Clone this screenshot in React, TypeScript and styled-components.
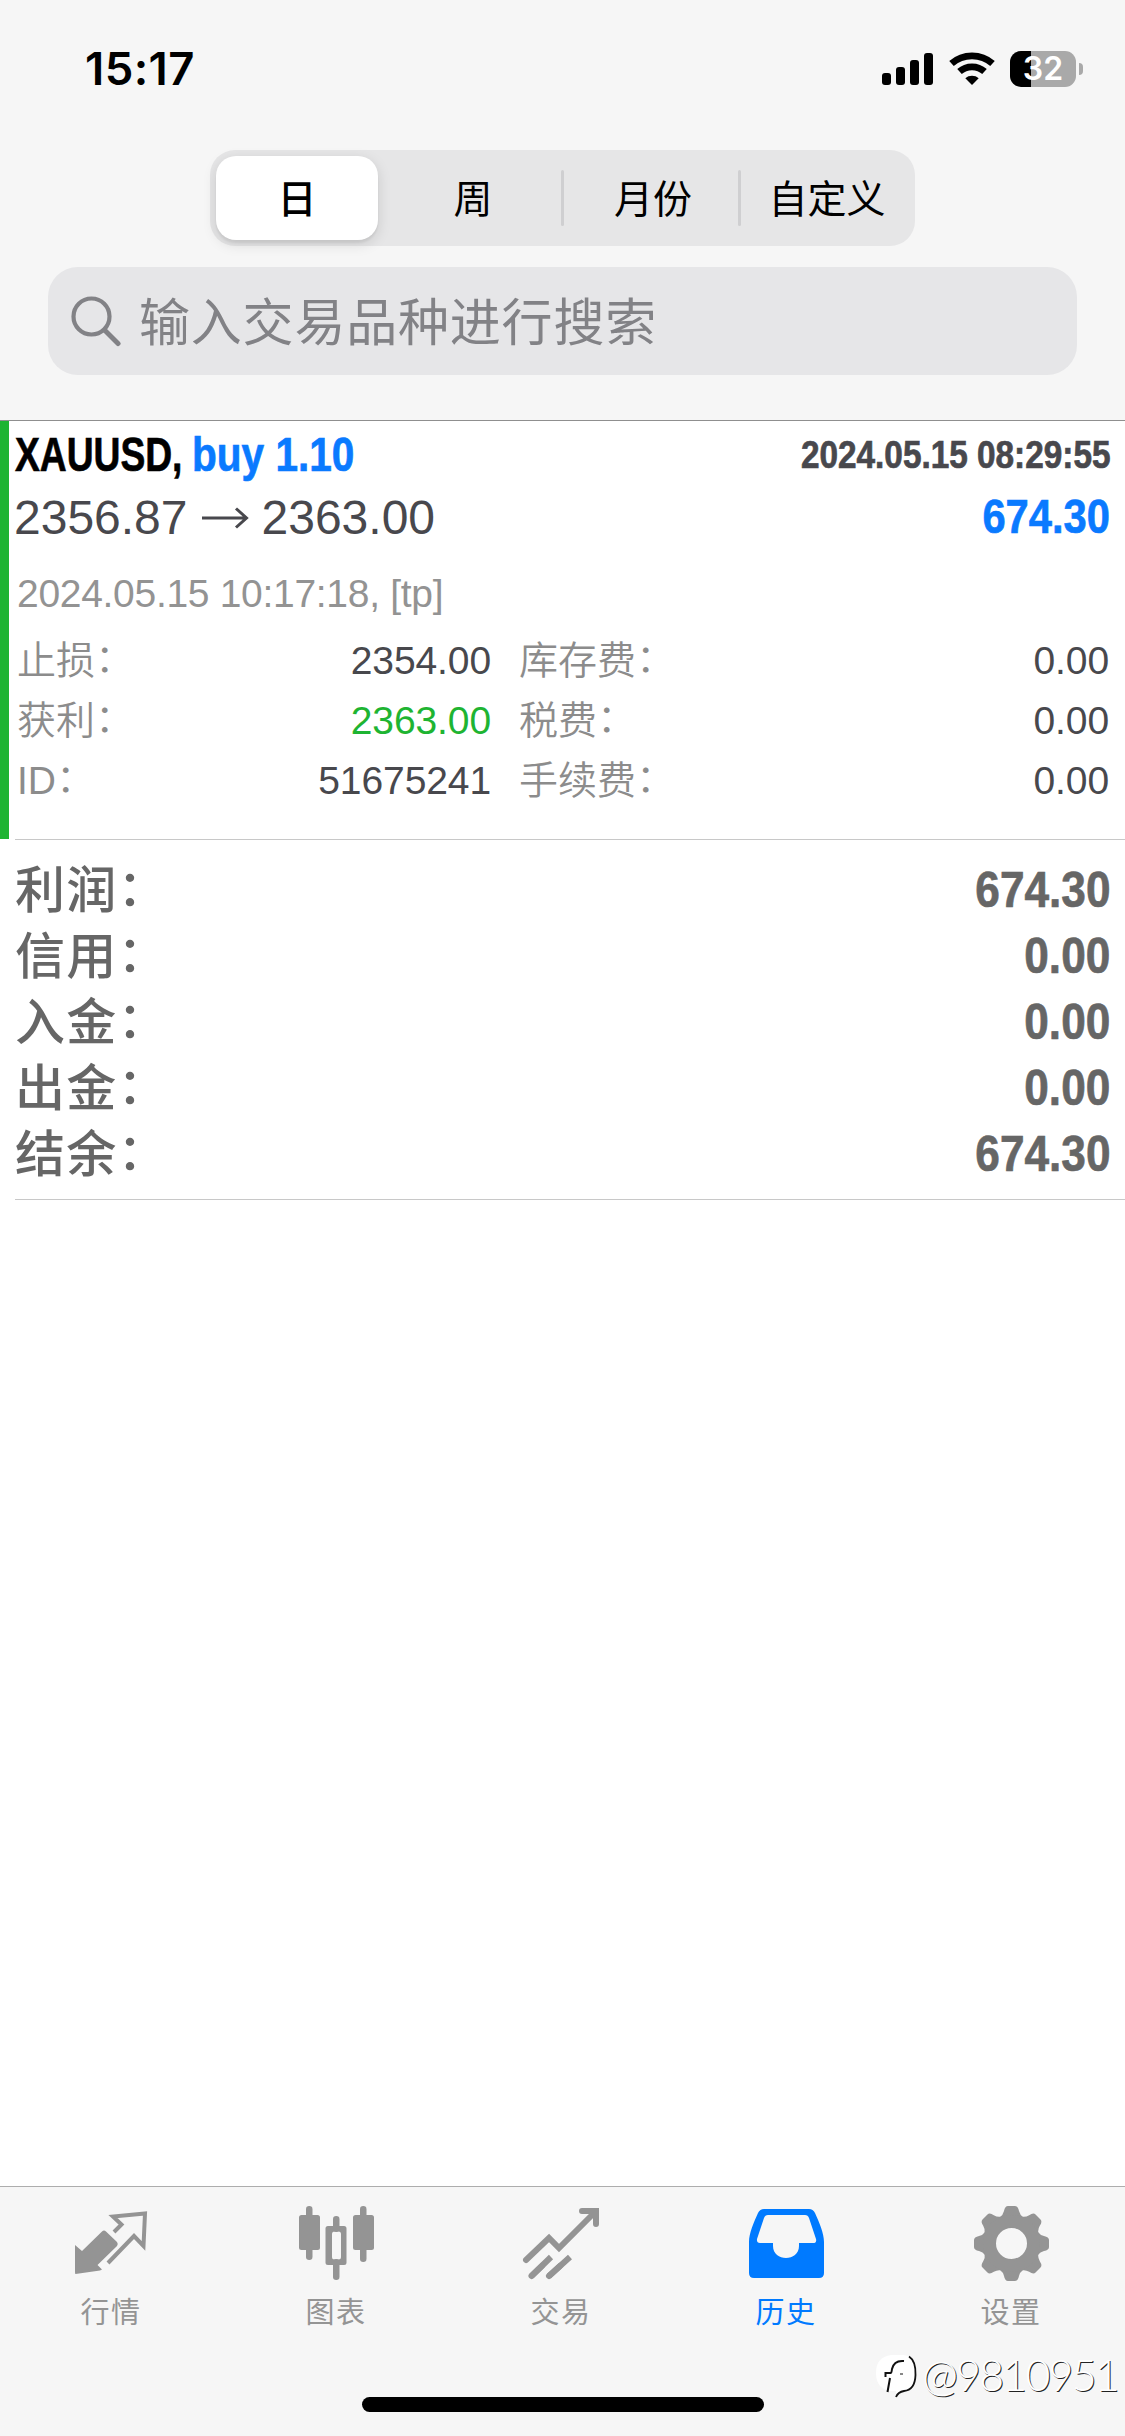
import React from "react";
import styled, { createGlobalStyle, css } from "styled-components";

const sans = `"Liberation Sans", "Noto Sans CJK SC", sans-serif`;
const cjk = `"Noto Sans CJK SC", sans-serif`;

const GlobalStyle = createGlobalStyle`
  *, *::before, *::after { box-sizing: border-box; }
  html, body { margin: 0; padding: 0; background: #fff; }
  body { font-family: ${sans}; }
`;

const Screen = styled.div`
  position: relative;
  display: flex;
  flex-direction: column;
  width: 1125px;
  height: 2436px;
  overflow: hidden;
  background: #fff;
`;

const Header = styled.header`
  display: flex;
  flex-direction: column;
  align-items: center;
  height: 421px;
  background: #f6f6f6;
  border-bottom: 1px solid #8f8f8f;
`;

const StatusBar = styled.div`
  display: flex;
  justify-content: space-between;
  align-items: center;
  align-self: stretch;
  height: 150px;
  padding: 0 42px 12px 85px;
`;

const Clock = styled.time`
  font: 600 45.500px/60px Inter, sans-serif;
  letter-spacing: 0.4px;
  color: #000;
`;

const StatusIcons = styled.div`
  display: flex;
  align-items: center;
  gap: 15px;
`;

const BatteryBox = styled.div`
  display: flex;
  align-items: center;
  gap: 3px;
`;

const BatteryBody = styled.div<{ $level: number }>`
  width: 66px;
  height: 36px;
  border-radius: 11px;
  background: linear-gradient(to right, #000 ${(p) => p.$level}%, #a9a9a9 ${(p) => p.$level}%);
  color: #fff;
  font: 600 32px/36px Inter, sans-serif;
  text-align: center;
`;

const BatteryNub = styled.div`
  width: 4px;
  height: 12px;
  border-radius: 0 4px 4px 0;
  background: #a9a9a9;
`;

const Segments = styled.nav`
  display: flex;
  align-items: center;
  width: 705px;
  height: 96px;
  padding: 0 6px;
  border-radius: 25px;
  background: #e6e6e7;
`;

const Segment = styled.button<{ $active?: boolean; $width: number }>`
  display: flex;
  align-items: center;
  justify-content: center;
  width: ${(p) => p.$width}px;
  height: 84px;
  padding: 0 0 5px 4px;
  border: 0;
  border-radius: 20px;
  background: transparent;
  color: #000;
  font: 400 39px/56px ${cjk};
  ${(p) =>
    p.$active &&
    css`
      padding-left: 0;
      background: #fff;
      font-weight: 500;
      box-shadow: 0 4px 14px rgba(0, 0, 0, 0.13), 0 3px 2px rgba(0, 0, 0, 0.05);
    `}
`;

const SegmentRule = styled.span<{ $hidden?: boolean }>`
  width: 3px;
  height: 56px;
  border-radius: 2px;
  background: ${(p) => (p.$hidden ? "transparent" : "#cfcfd1")};
`;

const SearchField = styled.div`
  display: flex;
  align-items: center;
  gap: 17px;
  width: 1029px;
  height: 108px;
  margin-top: 21px;
  padding: 0 24px 0 23px;
  border-radius: 30px;
  background: #e6e6e8;
  color: #828286;
`;

const Placeholder = styled.span`
  padding-bottom: 4px;
  font: 400 51px/72px ${cjk};
  letter-spacing: 0.8px;
`;

const Deal = styled.article`
  height: 418px;
  padding: 0 15px 0 7px;
  border-left: 9px solid #1eb432;
`;

const DealLine = styled.div<{ $height: number; $top?: number }>`
  display: flex;
  justify-content: space-between;
  align-items: center;
  height: ${(p) => p.$height}px;
  padding-top: ${(p) => p.$top ?? 0}px;
`;

const Condensed = styled.span<{ $size: number; $color: string; $fit: number; $end?: boolean }>`
  display: inline-block;
  font: 700 ${(p) => p.$size}px/60px "Liberation Sans", sans-serif;
  color: ${(p) => p.$color};
  -webkit-text-stroke: 0.7px ${(p) => p.$color};
  white-space: nowrap;
  transform: scaleX(${(p) => p.$fit});
  transform-origin: ${(p) => (p.$end ? "right" : "left")} center;
`;

const Title = styled.div`
  display: grid;
  grid-template-columns: 177px auto;
  margin-left: -1px;
`;

const Prices = styled.div`
  display: flex;
  align-items: center;
  gap: 13px;
  margin-left: -2px;
  padding-top: 1px;
  font: 400 48px/60px "Liberation Sans", sans-serif;
  color: #48484d;
`;

const Note = styled.div`
  height: 60px;
  margin-top: 17px;
  padding-left: 1px;
  font: 400 39px/60px "Liberation Sans", sans-serif;
  letter-spacing: -0.3px;
  color: #939393;
`;

const Details = styled.dl`
  display: grid;
  grid-template-columns: 474px 590px;
  column-gap: 28px;
  grid-auto-rows: 60px;
  margin: 7px 0 0 1px;
`;

const Detail = styled.div`
  display: flex;
  justify-content: space-between;
  align-items: center;
`;

const DetailName = styled.dt`
  font: 350 39px/60px "Liberation Sans", ${cjk};
  color: #8c8c8c;
`;

const DetailValue = styled.dd<{ $green?: boolean }>`
  margin: 0;
  font: 400 39px/60px "Liberation Sans", sans-serif;
  letter-spacing: -0.1px;
  color: ${(p) => (p.$green ? "#1eb432" : "#48484d")};
`;

const Colon = styled.span<{ $raise: number }>`
  display: inline-block;
  transform: translateY(-${(p) => p.$raise}px);
`;

const Summary = styled.dl`
  display: flex;
  flex-direction: column;
  margin: 0 0 0 15px;
  height: 361px;
  padding: 17px 15px 0 0;
  border-top: 1px solid #c8c8c8;
  border-bottom: 1px solid #c8c8c8;
`;

const SummaryRow = styled.div`
  display: flex;
  justify-content: space-between;
  align-items: center;
  height: 66px;
`;

const SummaryName = styled.dt`
  padding-bottom: 8px;
  font: 500 50px/66px ${cjk};
  letter-spacing: 1.2px;
  color: #666;
`;

const SummaryValue = styled.dd`
  margin: 0;
`;

const TabBar = styled.nav`
  display: flex;
  flex-direction: column;
  align-items: center;
  height: 250px;
  margin-top: auto;
  border-top: 1px solid #adadad;
  background: #f6f6f6;
`;

const Tabs = styled.div`
  display: flex;
  align-self: stretch;
  height: 210px;
`;

const Tab = styled.button<{ $active?: boolean }>`
  display: flex;
  flex-direction: column;
  align-items: center;
  width: 225px;
  padding: 16px 3px 0 0;
  border: 0;
  background: transparent;
  color: ${(p) => (p.$active ? "#007aff" : "#949494")};
  font: 400 29px/42px ${cjk};
  letter-spacing: 1.4px;
`;

const TabIcon = styled.svg`
  display: block;
  width: 78px;
  height: 78px;
  margin-bottom: 8px;
`;

const HomeIndicator = styled.div`
  width: 402px;
  height: 15px;
  border-radius: 8px;
  background: #000;
`;

const Watermark = styled.div`
  position: absolute;
  right: 7px;
  top: 2350px;
  display: flex;
  align-items: center;
  gap: 4px;
  color: #fff;
  font: 300 43px/50px Lato, sans-serif;
  letter-spacing: -1.8px;
  text-shadow: 1px 1px 0 #222;
`;

function Signal() {
  return (
    <svg width="52" height="34" viewBox="0 0 52 34">
      <rect x="0" y="21" width="9" height="12" rx="3" />
      <rect x="14" y="15" width="9" height="18" rx="3" />
      <rect x="28" y="8" width="9" height="25" rx="3" />
      <rect x="42" y="1" width="9" height="32" rx="3" />
    </svg>
  );
}

function Wifi() {
  return (
    <svg width="46" height="34" viewBox="0 0 46 34" fill="none" stroke="#000" strokeWidth="6.8">
      <path d="M2.500 11.500C14 1.200 32 1.200 43.500 11.500" />
      <path d="M10.500 19.500C17.500 13.200 28.500 13.200 35.500 19.500" />
      <path d="M23 33L16.300 26.300C20 23 26 23 29.700 26.300Z" fill="#000" stroke="none" />
    </svg>
  );
}

function Battery() {
  return (
    <BatteryBox>
      <BatteryBody $level={32}>32</BatteryBody>
      <BatteryNub />
    </BatteryBox>
  );
}

function Magnifier() {
  return (
    <svg width="51" height="52" viewBox="0 0 51 52" fill="none" stroke="currentColor" strokeLinecap="round">
      <circle cx="20.500" cy="21.500" r="18" strokeWidth="4.200" />
      <path d="M34 35.500L47 48.500" strokeWidth="5" />
    </svg>
  );
}

function Arrow() {
  return (
    <svg width="48" height="24" viewBox="0 0 48 24" fill="none" stroke="currentColor" strokeWidth="3">
      <path d="M1 12H45M35 2.500L45.500 12L35 21.500" />
    </svg>
  );
}

function QuotesIcon() {
  return (
    <TabIcon viewBox="0 0 78 78">
      <path
        d="M3.500 71Q3 71 3 69V42L10 48L30 28.500Q32 26.500 34 28.500L45 39Q46.500 41 45 43L25.500 62L30 66.500L28 67.500Z"
        fill="currentColor"
      />
      <path
        d="M42 29L49.500 21.500L41 13.500L73 10.500L71.500 43L62 33L36 60"
        fill="none"
        stroke="currentColor"
        strokeWidth="4"
      />
    </TabIcon>
  );
}

function ChartIcon() {
  return (
    <TabIcon viewBox="0 0 78 78" fill="currentColor">
      <rect x="9" y="3" width="6.500" height="54" rx="3.200" />
      <rect x="2" y="12" width="21" height="35" rx="2.500" />
      <rect x="63" y="3" width="6.500" height="56" rx="3.200" />
      <rect x="56" y="12" width="21" height="35" rx="2.500" />
      <rect x="36" y="13" width="6.500" height="16" rx="3.200" />
      <rect x="36" y="56" width="6.500" height="21" rx="3.200" />
      <path
        fillRule="evenodd"
        d="M31 23H47Q49.500 23 49.500 25.500V59.500Q49.500 62 47 62H31Q28.500 62 28.500 59.500V25.500Q28.500 23 31 23ZM37.500 28.500Q35 28.500 35 31V54Q35 56.500 37.500 56.500H41.500Q44 56.500 44 54V31Q44 28.500 41.500 28.500Z"
      />
    </TabIcon>
  );
}

function TradeIcon() {
  return (
    <TabIcon viewBox="0 0 78 78" fill="none" stroke="currentColor" strokeWidth="6" strokeLinecap="round">
      <path d="M4 57L27 35L37 45L73 9" />
      <path d="M60 8H74V21" />
      <g strokeLinecap="butt">
        <path d="M9.500 73L29 54M27 73L48 54" />
      </g>
      <path d="M9.500 73L20 62.800M27 73L38 63" />
    </TabIcon>
  );
}

function HistoryIcon() {
  return (
    <TabIcon viewBox="0 0 78 78">
      <path
        fill="currentColor"
        fillRule="evenodd"
        d="M17 6H62Q66 6 68 10C72 19 77 30 77 39V70Q77 75 72 75H7Q2 75 2 70V39C2 30 7 19 11 10Q13 6 17 6ZM21 12Q18 12 17 15L10 36Q9.500 40 13 40H26V43C26 59 52 59 52 43V40H66Q70 40 69 36L62 15Q61 12 58 12Z"
      />
    </TabIcon>
  );
}

function SettingsIcon() {
  return (
    <TabIcon viewBox="0 0 78 78">
      <g fill="currentColor">
        {[0, 45, 90, 135, 180, 225, 270, 315].map((angle) => (
          <path
            key={angle}
            transform={`rotate(${angle} 39.500 40.500)`}
            d="M28 14Q31 12 32 8Q33 3 36 3H43Q46 3 47 8Q48 12 51 14V24H28Z"
          />
        ))}
      </g>
      <circle cx="39.500" cy="40.500" r="22" fill="none" stroke="currentColor" strokeWidth="13" />
    </TabIcon>
  );
}

function WatermarkLogo() {
  return (
    <svg width="42" height="48" viewBox="0 0 42 48">
      <path d="M15 4H27Q39 5 39 22Q39 39 27 40Q23 40 20 46V40H15Q0 38 0 22Q0 6 15 4Z" fill="#fff" />
      <path d="M33 5.500Q40 10 39.500 24Q39 39 28 40Q22 41 20 46" fill="none" stroke="#111" strokeWidth="1.800" />
      <path d="M28 10Q18 9 16 18Q15.500 22 15 22H9.500V26M14 27L11.500 41" fill="none" stroke="#111" strokeWidth="2" />
      <path d="M24 23H27" stroke="#111" strokeWidth="1" />
    </svg>
  );
}

const details = [
  { name: "止损", value: "2354.00" },
  { name: "库存费", value: "0.00" },
  { name: "获利", value: "2363.00", green: true },
  { name: "税费", value: "0.00" },
  { name: "ID", value: "51675241" },
  { name: "手续费", value: "0.00" },
];

const totals = [
  ["利润", "674.30"],
  ["信用", "0.00"],
  ["入金", "0.00"],
  ["出金", "0.00"],
  ["结余", "674.30"],
];

const tabs = [
  { label: "行情", Icon: QuotesIcon },
  { label: "图表", Icon: ChartIcon },
  { label: "交易", Icon: TradeIcon },
  { label: "历史", Icon: HistoryIcon, active: true },
  { label: "设置", Icon: SettingsIcon },
];

export default function App() {
  return (
    <Screen>
      <GlobalStyle />
      <Header>
        <StatusBar>
          <Clock>15:17</Clock>
          <StatusIcons>
            <Signal />
            <Wifi />
            <Battery />
          </StatusIcons>
        </StatusBar>
        <Segments>
          <Segment $active $width={162}>日</Segment>
          <SegmentRule $hidden />
          <Segment $width={180}>周</Segment>
          <SegmentRule />
          <Segment $width={174}>月份</Segment>
          <SegmentRule />
          <Segment $width={168}>自定义</Segment>
        </Segments>
        <SearchField>
          <Magnifier />
          <Placeholder>输入交易品种进行搜索</Placeholder>
        </SearchField>
      </Header>

      <Deal>
        <DealLine $height={66} $top={2}>
          <Title>
            <Condensed $size={48} $color="#000" $fit={0.775}>XAUUSD,</Condensed>
            <Condensed $size={48} $color="#0a7aff" $fit={0.845}>buy 1.10</Condensed>
          </Title>
          <Condensed $size={38.5} $color="#48484d" $fit={0.866} $end>2024.05.15 08:29:55</Condensed>
        </DealLine>
        <DealLine $height={60}>
          <Prices>
            <span>2356.87</span>
            <Arrow />
            <span>2363.00</span>
          </Prices>
          <Condensed $size={48} $color="#0a7aff" $fit={0.868} $end>674.30</Condensed>
        </DealLine>
        <Note>2024.05.15 10:17:18, [tp]</Note>
        <Details>
          {details.map((d) => (
            <Detail key={d.name}>
              <DetailName>
                {d.name}
                <Colon $raise={2}>：</Colon>
              </DetailName>
              <DetailValue $green={d.green}>{d.value}</DetailValue>
            </Detail>
          ))}
        </Details>
      </Deal>

      <Summary>
        {totals.map(([name, value]) => (
          <SummaryRow key={name}>
            <SummaryName>
              {name}
              <Colon $raise={2}>：</Colon>
            </SummaryName>
            <SummaryValue>
              <Condensed $size={50.5} $color="#666" $fit={0.875} $end>{value}</Condensed>
            </SummaryValue>
          </SummaryRow>
        ))}
      </Summary>

      <TabBar>
        <Tabs>
          {tabs.map(({ label, Icon, active }) => (
            <Tab key={label} $active={active}>
              <Icon />
              {label}
            </Tab>
          ))}
        </Tabs>
        <HomeIndicator />
      </TabBar>

      <Watermark>
        <WatermarkLogo />
        @9810951
      </Watermark>
    </Screen>
  );
}
